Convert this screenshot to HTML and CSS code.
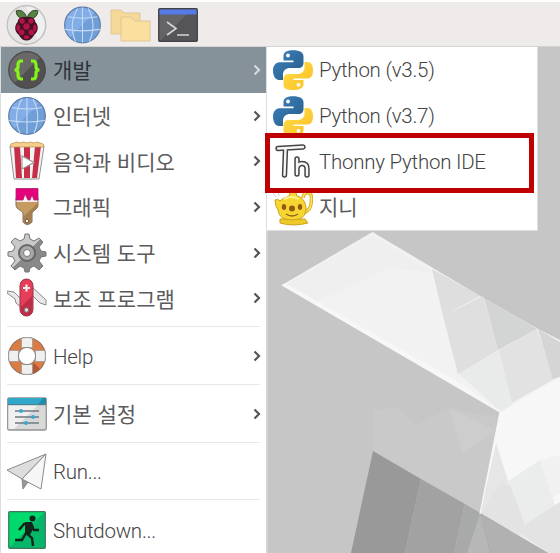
FILE: index.html
```html
<!DOCTYPE html>
<html lang="ko">
<head>
<meta charset="utf-8">
<title>Desktop</title>
<link rel="stylesheet" href="styles.css">
</head>
<body>
<svg width="0" height="0" class="defs">
  <defs>
    <linearGradient id="blue" x1="0" y1="0" x2="1" y2="1"><stop offset=".5" stop-color="#82ade7"/><stop offset=".5" stop-color="#709fd8"/></linearGradient>
    <linearGradient id="dark" x1="0" y1="0" x2="1" y2="1"><stop offset=".5" stop-color="#6a6866"/><stop offset=".5" stop-color="#514f4f"/></linearGradient>
    <linearGradient id="gear" x1="0" y1="0" x2="1" y2="1"><stop offset=".5" stop-color="#c9c9c9"/><stop offset=".5" stop-color="#898989"/></linearGradient>
    <linearGradient id="green" x1="0" y1="0" x2="1" y2="1"><stop offset=".5" stop-color="#00d96c"/><stop offset=".5" stop-color="#06b66a"/></linearGradient>
    <linearGradient id="pyb" x1="0" y1="0" x2="1" y2="1"><stop offset="0" stop-color="#3b82bd"/><stop offset="1" stop-color="#285b89"/></linearGradient>
    <linearGradient id="pyy" x1="0" y1="0" x2="1" y2="1"><stop offset="0" stop-color="#ffdf4f"/><stop offset="1" stop-color="#fcbd20"/></linearGradient>
    <symbol id="globe" viewBox="0 0 40 40">
      <circle cx="20" cy="20" r="18.300" fill="url(#blue)" stroke="#5a7caa" stroke-width="1.200"/>
      <path d="M20 2v36M5 11.500q15 3 30 0M2 24.500q18 3 36 0M15 3Q5 20 13 37M26 3q9 17 1 34" fill="none" stroke="#c4daf5" stroke-width="1.100"/>
    </symbol>
    <symbol id="python" viewBox="0 0 40 40">
      <path d="M20 .3c-7 0-9.500 2.500-9.500 6v4.200h10v1.800H6.500C2.500 12.300 0 16 0 20.500c0 5.500 2.500 9.500 6 9.500h4v-5.500c0-4 3-6.500 7-6.500h8.500c3 0 5-2 5-5V6.500c0-4-3.500-6.200-10.500-6.200z" fill="url(#pyb)"/>
      <path d="M31.500 12v5.500c0 4-3 6.500-7 6.500h-9c-3 0-5 2-5 5v6c0 4 4 5 9.800 5s10.200-2 10.200-5.500V30H20.500v-1.500h14c3.500 0 5.500-3 5.500-8.200s-2-8.300-5.500-8.300z" fill="url(#pyy)"/>
      <circle cx="15" cy="5.500" r="1.900" fill="#fff"/><circle cx="25.500" cy="34.800" r="1.900" fill="#fff"/>
    </symbol>
    <symbol id="arrow" viewBox="0 0 8 12"><path d="M1.500 1.500 6 6l-4.500 4.500" fill="none" stroke="currentColor" stroke-width="2.200"/></symbol>
  </defs>
</svg>

<div class="desktop">
  <svg class="wallpaper" viewBox="0 0 560 553">
    <path fill="#c6c6c6" d="M0 0h560v553H0z"/>
    <path fill="#c9c9c9" d="m373 410 24-2 19 17 33-17 50 10-19 96-107-62z"/>
    <path fill="#cdcdcd" d="m449 408 46 22-32 23z"/>
    <path fill="#f2f2f2" d="M372.500 232 282 285l218 127 60-34v-38l-22-11-58-33z"/>
    <path fill="#efefef" d="m372 235-85 49 30 17 73-33 42 4z"/>
    <path fill="#e9eaea" d="m458 373 41-23 14 54-13 7z"/>
    <path fill="#dedede" d="m432 269 48 27-37 20z"/>
    <path fill="#dfdfdf" d="m443 316 40-20 15 54-40 24z"/>
    <path fill="#d3d4d4" d="m484 298 53 31-39 21z"/>
    <path fill="#e2e2e2" d="m499 350 38-21 17 50-42 24z"/>
    <path fill="#d5d5d5" d="m538 329 22 13v35l-7 2z"/>
    <path fill="#f7f7f7" d="m282 285 3-2 180 103 34 25z"/>
    <path fill="#f7f7f7" d="m500 412 60-35v176h-12l-68-39z"/>
    <path fill="#e6e6e6" d="m496 443 25 78-41-7z"/>
    <path fill="#ebecec" d="m507 482 33-22 20 60v33h-12l-67-39z"/>
    <path fill="#e3e3e3" d="m480 514 20-31 10 2 14 37-4 15zM516 530l44-28v51h-12z"/>
    <path fill="#f1f1f1" d="m540 460 20-5v38l-8 5z"/>
    <path fill="#999" d="m373 451 48 28-16 74h-54z"/>
    <path fill="#a2a2a2" d="m421 479 44 25-11 49h-49z"/>
    <path fill="#a8aaa9" d="m465 504 83 49h-94z"/>
    <path fill="#b1b1b1" d="m480 514 68 39h-57z"/>
    <path fill="#b7b7b7" d="m480 514-13 39h23z"/>
    <path fill="none" stroke="#f7f7f7" stroke-width="1.200" d="m282 285 218 127-20 102"/>
  </svg>

  <header class="panel">
    <svg class="launcher berry" viewBox="0 0 42 42">
      <circle cx="21" cy="21" r="19.800" fill="#e4e4e4" stroke="#bcbcbc" stroke-width="1.200"/>
      <path d="M21 2a19 19 0 0 1 11 34z" fill="#f0f0f0"/>
      <path d="M21 13C19 7 15 5 10.500 6.500c0 5 3 8.500 10 8zM22 13c2-6 6-8 10.500-6.500 0 5-3 8.500-10 8z" fill="#568342" stroke="#303c25"/>
      <path d="M21 13c5-1 9 1 9 5 4 4 3 10-1 13-2 4-5 6-8 6s-6-2-8-6c-4-3-5-9-1-13 0-4 4-6 9-5z" fill="#431324"/>
      <g fill="#b31347"><circle cx="16.500" cy="17" r="2.800"/><circle cx="25.500" cy="17" r="2.800"/><circle cx="21" cy="22.500" r="3.300"/><ellipse cx="12.500" cy="24" rx="1.800" ry="3.500"/><ellipse cx="29.500" cy="24" rx="1.800" ry="3.500"/><circle cx="16" cy="28.500" r="2.900"/><circle cx="26" cy="28.500" r="2.900"/><ellipse cx="21" cy="33.500" rx="3" ry="2"/></g>
    </svg>
    <svg class="launcher web"><use href="#globe"/></svg>
    <svg class="launcher files" viewBox="0 0 42 34">
      <path d="M1 2h10l3 3h16v21H1z" fill="#f5d998" stroke="#dfc693"/>
      <path d="M11 9h10l4 4h15v20H11z" fill="#fadf9f" stroke="#dfc693"/>
    </svg>
    <svg class="launcher term" viewBox="0 0 40 34">
      <rect x=".7" y=".7" width="38.600" height="32.600" rx="1" fill="#555456" stroke="#414149" stroke-width="1.300"/>
      <path d="M1.500 6H29L3 32H1.500z" fill="#646365"/><path d="M1.500 1.500h37v5h-37z" fill="#557be6"/>
      <path d="m9 14 9 6.500L9 27M19 27h12" fill="none" stroke="#d5d5d5" stroke-width="1.700"/>
    </svg>
  </header>

  <nav class="menu">
    <div class="item active">
      <svg class="icon" viewBox="0 0 40 40"><circle cx="20" cy="20" r="18.300" fill="url(#dark)" stroke="#494949" stroke-width="1.200"/><path d="M16 11h-2q-3 0-3 4v2q0 3-3.500 3 3.500 0 3.500 3v2q0 4 3 4h2M24 11h2q3 0 3 4v2q0 3 3.500 3-3.500 0-3.500 3v2q0 4-3 4h-2" fill="none" stroke="#83f51a" stroke-width="3.200"/></svg>
      <span class="label ko">개발</span><svg class="arrow"><use href="#arrow"/></svg>
    </div>
    <div class="item"><svg class="icon"><use href="#globe"/></svg><span class="label ko">인터넷</span><svg class="arrow"><use href="#arrow"/></svg></div>
    <div class="item">
      <svg class="icon" viewBox="0 0 40 40"><path d="M3 5h34l-5 33H7z" fill="#f4f4f4" stroke="#929292"/><path d="M7 5h6l2 32H9zM17 5h6v32h-6zM28 5h6l-4 32h-5z" fill="#c72e48"/><path d="M3 6q0-4 4-4 3-2 6 0 3-2 7 0 3-2 7 0 3-2 6 0 4 0 4 4z" fill="#f5cf8a" stroke="#b99966" stroke-width=".8"/><path d="M15 15v13l12-6.500z" fill="#fff" stroke="#999" stroke-width="1.200"/></svg>
      <span class="label ko">음악과 비디오</span><svg class="arrow"><use href="#arrow"/></svg>
    </div>
    <div class="item">
      <svg class="icon" viewBox="0 0 40 40"><path d="M9 11h22v7c0 5-6 5-6 9v8q-5 5-9 0v-8c0-4-7-4-7-9z" fill="#c69b62" stroke="#80715e"/><path d="m31 16-15 14v5q4 5 9 0v-8c0-4 6-4 6-9z" fill="#a67e4f"/><path d="M9.500 9h21v6h-21z" fill="#f6edf1"/><path d="M9 1.500h22V13h-4l-2-5-2 5h-2l-3-6-2 6H9z" fill="#e6007c" stroke="#a5205f" stroke-width=".8"/><circle cx="20" cy="34" r="1.800" fill="#fff" stroke="#66594b"/></svg>
      <span class="label ko">그래픽</span><svg class="arrow"><use href="#arrow"/></svg>
    </div>
    <div class="item">
      <svg class="icon" viewBox="0 0 40 40"><path d="m17 6 1-5h4l1 5 4 2 5-3 4 4-4 5 2 4 5 1v4l-5 1-2 4 4 5-4 4-5-4-4 2-1 4h-4l-1-4-4-2-5 4-4-4 4-5-2-4-5-1v-4l5-1 2-4-4-5 4-4 5 3z" fill="url(#gear)" stroke="#777"/><circle cx="20" cy="20" r="8" fill="#aaa" stroke="#676767" stroke-width="2"/><circle cx="20" cy="20" r="3.500" fill="#fff" stroke="#777"/></svg>
      <span class="label ko">시스템 도구</span><svg class="arrow"><use href="#arrow"/></svg>
    </div>
    <div class="item">
      <svg class="icon" viewBox="0 0 40 40"><path d="m16 31-7-6-1-4-8-6v-2l7 1 10 10zM24 8l15 14v5l-6-2-11-11z" fill="#e8e8e8" stroke="#888"/><rect x="13" y="1" width="13" height="37" rx="6.500" fill="#e63d58" stroke="#963344"/><path d="m25 18-12 12v2q2 6 7 6t5-6z" fill="#bd2d47"/><path d="M19.500 6.500v7M16 10h7" stroke="#eee" stroke-width="2.200"/><circle cx="19.500" cy="32" r="2.200" fill="#ddd" stroke="#777"/></svg>
      <span class="label ko">보조 프로그램</span><svg class="arrow"><use href="#arrow"/></svg>
    </div>
    <div class="rule"></div>
    <div class="item">
      <svg class="icon" viewBox="0 0 40 40"><circle cx="20" cy="20" r="13.500" fill="none" stroke="#85736a" stroke-width="11"/><circle cx="20" cy="20" r="13.500" fill="none" stroke="#dc7b43" stroke-width="9.200"/><path d="M27 27l6 6Q29 37 24 38l-1-8z" fill="#b35734"/><path d="M14.500 2.200q5.500-1.500 11 0v9.500h-11zM28.300 14.500h9.500q1.500 5.500 0 11h-9.500zM14.500 28.300h11v9.500q-5.500 1.500-11 0zM2.200 14.500h9.500v11H2.200q-1.500-5.500 0-11z" fill="#f0f0f0" stroke="#999" stroke-width=".8"/><circle cx="20" cy="20" r="8.600" fill="#fff" stroke="#8d8681"/></svg>
      <span class="label">Help</span><svg class="arrow"><use href="#arrow"/></svg>
    </div>
    <div class="rule"></div>
    <div class="item">
      <svg class="icon" viewBox="0 0 40 40"><rect x=".7" y="4" width="38.600" height="32" rx="1.500" fill="#d8d8d8" stroke="#919494" stroke-width="1.300"/><path d="M1.500 11H31L7 35H1.500z" fill="#f0f0f0"/><path d="M1 4h38v6.500H1z" fill="#218aaa"/><path d="M1 4h35l-5 6.500H1z" fill="#31a8ca"/><path d="M1 10.700h38" stroke="#477984"/><path d="M8 17h24M8 23h24M8 29h24" stroke="#70797d" stroke-width="1.300"/><g fill="#35abd0"><circle cx="14" cy="17" r="2"/><circle cx="26" cy="23" r="2"/><circle cx="19" cy="29" r="2"/></g></svg>
      <span class="label ko">기본 설정</span><svg class="arrow"><use href="#arrow"/></svg>
    </div>
    <div class="rule"></div>
    <div class="item">
      <svg class="icon" viewBox="0 0 40 40"><path d="m15 27 1 10 5-7z" fill="#999" stroke="#888"/><path d="M39 2 0 18l15 9z" fill="#ddd" stroke="#8a8a8a" stroke-linejoin="round"/><path d="M39 2 15 27l19 10z" fill="#f6f6f6" stroke="#8a8a8a" stroke-linejoin="round"/></svg>
      <span class="label">Run...</span>
    </div>
    <div class="rule"></div>
    <div class="item last">
      <svg class="icon" viewBox="0 0 40 40"><rect x="1.700" y="1.700" width="36.600" height="36.600" rx="1" fill="url(#green)" stroke="#3c7859" stroke-width="1.200"/><circle cx="25.500" cy="8.500" r="3" fill="#12251b"/><path d="m23 13-4 10 6 5 1 8M19 23l-4 7H8M23 14l-6 0-5 6M23 14l4 6h5" fill="none" stroke="#12251b" stroke-width="2.400"/><path d="m18 12 7 0 2 5-4 8-5-1z" fill="#12251b"/></svg>
      <span class="label">Shutdown...</span>
    </div>
  </nav>

  <nav class="submenu">
    <div class="item"><svg class="icon"><use href="#python"/></svg><span class="label">Python (v3.5)</span></div>
    <div class="item"><svg class="icon"><use href="#python"/></svg><span class="label">Python (v3.7)</span></div>
    <div class="item">
      <svg class="icon" viewBox="0 0 40 40"><g fill="none" stroke-linecap="round" stroke-linejoin="round"><path d="M5 7.500 30 6M12.500 8 11.500 34M24 18v15M24 27q1-4.500 5-4.500 5 0 5 5V34" stroke="#444" stroke-width="5.400"/><path d="M5 7.500 30 6M12.500 8 11.500 34M24 18v15M24 27q1-4.500 5-4.500 5 0 5 5V34" stroke="#f6f6f6" stroke-width="2.400"/></g></svg>
      <span class="label">Thonny Python IDE</span>
    </div>
    <div class="item">
      <svg class="icon" viewBox="0 0 40 40"><path d="M3 10q-5-4 0-8M6 9q-2-4 2-7" fill="none" stroke="#d0d0d0"/><path d="M30 11c1-8 9-6 8.500 0 0 9-2 13-9 15" fill="none" stroke="#d7af18" stroke-width="3.400"/><path d="M30 11c1-8 9-6 8.500 0 0 9-2 13-9 15" fill="none" stroke="#ffe66b" stroke-width="1.400"/><path d="M7 32h25l3 4q-15 4-28 0z" fill="#efc928" stroke="#caa322"/><path d="M2 13q3-2 5 1 3-3 7-4l2-1q0-4 4-4t4 4l3 1q6 4 6 11 0 9-7 11-7 2-14 0-6-2-7-9-3-4-3-10z" fill="#f6d633" stroke="#caa322"/><path d="M11 12q8-4 15 0" stroke="#fff18f" stroke-width="2" fill="none"/><g fill="#975712"><ellipse cx="11" cy="20" rx="2.200" ry="3"/><ellipse cx="19" cy="21.500" rx="3" ry="3"/><ellipse cx="27" cy="20" rx="2.200" ry="3"/></g><path d="M13 27q6 4 12 0" fill="none" stroke="#8d6114" stroke-width="1.500"/></svg>
      <span class="label ko">지니</span>
    </div>
  </nav>
  <div class="highlight"></div>
</div>
</body>
</html>
```
FILE: styles.css
```css
* { box-sizing: border-box; }
body { margin: 0; overflow: hidden; font-family: Roboto, "Noto Sans CJK KR", sans-serif; }
.defs { position: absolute; }
.desktop { position: relative; width: 560px; height: 553px; overflow: hidden; }
.wallpaper { position: absolute; inset: 0; width: 560px; height: 553px; }
.panel {
  position: relative;
  display: flex;
  align-items: center;
  height: 47px;
  padding: 2px 0 0 6px;
  background: #eeebea;
  border-top: 2px solid #fff;
  border-bottom: 1px solid #d5d4d4;
}
.launcher { flex: none; }
.berry { width: 41px; height: 42px; }
.web { width: 39px; height: 40px; margin-left: 16px; }
.files { width: 42px; height: 34px; margin-left: 8px; }
.term { width: 40px; height: 34px; margin-left: 6px; }
.menu {
  position: absolute;
  top: 47px;
  left: 0;
  width: 268px;
  height: 520px;
  background: #fff;
  border-left: 1px solid #dedede;
  border-right: 2px solid #d5d5d5;
}
.item { display: flex; align-items: center; height: 45.700px; padding: 0 5px 0 6px; color: #5b5b5b; }
.active { background: #85929a; color: #2f3439; }
.icon { flex: none; width: 40px; height: 40px; }
.label { margin-left: 6px; padding-top: 1px; font-size: 20.500px; font-weight: 300; letter-spacing: -0.250px; line-height: 26px; white-space: nowrap; color: #444; }
.ko { padding-top: 0; font-family: "Noto Sans CJK KR", sans-serif; font-size: 21px; font-weight: 400; letter-spacing: 0; color: inherit; margin-top: -1px; }
.arrow { flex: none; width: 8px; height: 12px; margin-left: auto; color: #555; }
.active .arrow { color: #d2d8dc; }
.last { padding-top: 2px; }
.rule { height: 12.100px; padding-top: 5px; margin: 0 6px; }
.rule::before { content: ""; display: block; height: 1px; background: #e8e8e8; }
.submenu {
  position: absolute;
  top: 47px;
  left: 266px;
  width: 272px;
  height: 184px;
  background: #fff;
  border: 1px solid #dedede;
  border-top: 0;
}
.highlight { position: absolute; left: 265px; top: 133px; width: 269px; height: 60px; border: 5px solid #c00000; }
```
